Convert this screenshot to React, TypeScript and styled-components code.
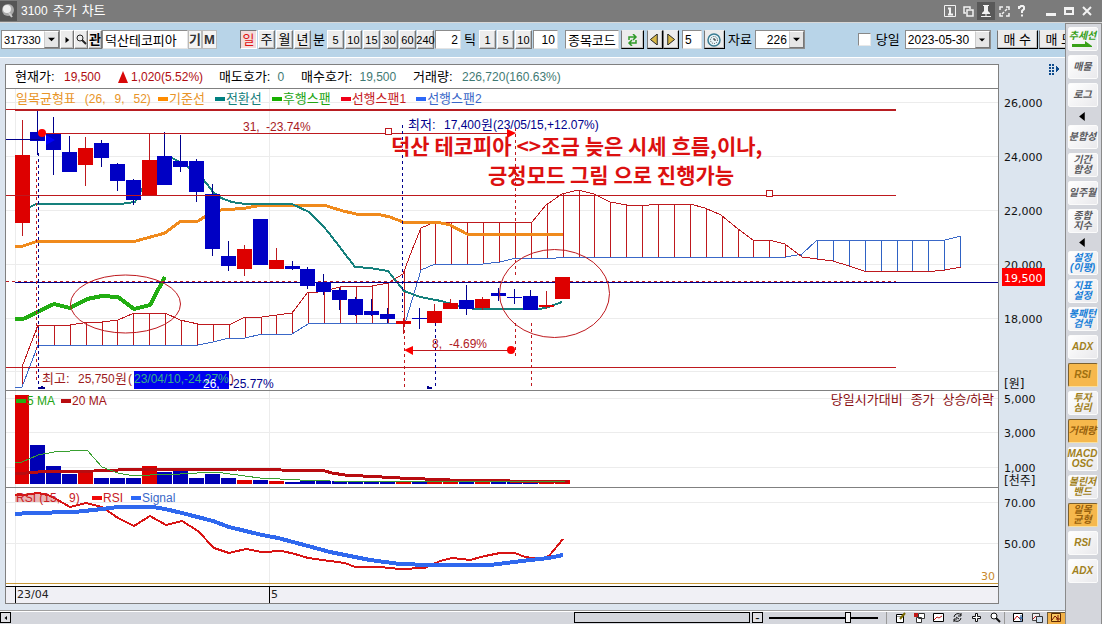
import React from "react";
import styled, { createGlobalStyle, css } from "styled-components";

const Global = createGlobalStyle`
  *, *::before, *::after { box-sizing: border-box; }
  body { margin: 0; background: #dce5ef; }
  button, input, select { font: inherit; color: inherit; margin: 0; padding: 0; border-radius: 0; }
`;

const SANS = `"Liberation Sans", "Noto Sans CJK KR", sans-serif`;
const WIDE = `"DejaVu Sans", "Noto Sans CJK KR", sans-serif`;
const RED = "#dd0000";
const CRIMSON = "#be191e";
const BLUE = "#0000c4";
const NAVY = "#00008c";

/* ---------- window ---------- */

const Window = styled.div`
  display: flex;
  flex-direction: column;
  min-height: 100vh;
  overflow: hidden;
  font: 13px/16px ${SANS};
  color: #000;
`;

// Latin letters and figures run one size below the Hangul around them.
const Latin = styled.span`
  font-size: 12px;
`;

const TitleBar = styled.header`
  display: flex;
  align-items: center;
  height: 23px;
  padding-right: 6px;
  background: #7b7b7b;
  border-bottom: 1px solid #d8d8d8;
  color: #fff;
`;

const AppIcon = styled.svg`
  width: 17px;
  height: 20px;
  margin-right: 4px;
`;

const Title = styled.h1`
  display: flex;
  flex: 1;
  gap: 5px;
  margin: 0;
  font-size: 13px;
  font-weight: 400;
  white-space: nowrap;
`;

const TitleButton = styled.button<{ $on?: boolean; $gap?: number }>`
  display: grid;
  place-items: center;
  width: 18px;
  height: 18px;
  margin-left: ${(p) => p.$gap ?? 0}px;
  border: 0;
  background: ${(p) => (p.$on ? "#595959" : "transparent")};
  color: #f2f2f2;
`;

const Body = styled.div`
  display: flex;
  flex: 1;
`;

const Main = styled.main`
  display: flex;
  flex: 1;
  flex-direction: column;
  min-width: 0;
  background: #dce5ef;
`;

/* ---------- toolbar ---------- */

const Toolbar = styled.div`
  display: flex;
  align-items: center;
  height: 35px;
  padding: 0 0 1px 1px;
  overflow: hidden;
  background: #b8d4e8;
  border-bottom: 1px solid #fff;
  & > * { flex: none; }
`;

const Group = styled.div<{ $gap?: number; $left?: number }>`
  display: flex;
  align-items: center;
  gap: ${(p) => p.$gap ?? 0}px;
  margin-left: ${(p) => p.$left ?? 0}px;
`;

const Field = styled.input<{ $w: number; $num?: boolean; $right?: boolean }>`
  width: ${(p) => p.$w}px;
  height: 19px;
  padding: 0 2px;
  border: 1px solid #8c8c8c;
  border-right-color: #e4e4e4;
  border-bottom-color: #e4e4e4;
  background: #fff;
  font-size: ${(p) => (p.$num ? 12 : 13)}px;
  text-align: ${(p) => (p.$right ? "right" : "left")};
`;

const Key = styled.button<{ $w?: number; $pressed?: boolean; $dark?: boolean; $flat?: boolean; $num?: boolean }>`
  display: flex;
  align-items: center;
  justify-content: center;
  width: ${(p) => p.$w ?? 17}px;
  height: 19px;
  white-space: nowrap;
  background: #ececec;
  border: 1px solid;
  border-color: #fff #777 #777 #fff;
  box-shadow: inset -1px -1px 0 #c0c0c0;
  ${(p) => p.$num && css`font-size: 11px;`}
  ${(p) => p.$pressed && css`
    border-color: #777 #fff #fff #777;
    box-shadow: none;
    background: #f3dcdc;
    color: #e01010;
  `}
  ${(p) => p.$dark && css`border-color: #eee #000 #000 #777;`}
  ${(p) => p.$flat && css`
    border-color: #bbb;
    box-shadow: none;
    background: #f4f4f4;
    font-weight: 700;
    color: #333;
  `}
`;

const Combo = styled.span<{ $w: number; $size?: number; $right?: boolean }>`
  display: flex;
  width: ${(p) => p.$w}px;
  height: 19px;
  border: 1px solid #8c8c8c;
  background: #fff;
  font-size: ${(p) => p.$size ?? 12}px;
  select, input {
    flex: 1;
    min-width: 0;
    padding: 0 2px;
    border: 0;
    background: transparent;
    appearance: none;
    outline: 0;
    text-align: ${(p) => (p.$right ? "right" : "left")};
  }
`;

const ComboArrow = styled.span`
  display: grid;
  flex: none;
  place-items: center;
  width: 15px;
  background: #e6e6e6;
  border: 1px solid;
  border-color: #fff #777 #777 #ccc;
  pointer-events: none;
`;

const Tick = styled.input`
  width: 13px;
  height: 13px;
  appearance: none;
  background: #fff;
  border: 1px solid;
  border-color: #888 #e8e8e8 #e8e8e8 #888;
`;

const Label = styled.label<{ $pad?: number }>`
  padding: 0 ${(p) => p.$pad ?? 3}px;
`;

const Triangle = ({ dir, fill = "#000", size = 7 }: { dir: "d" | "l" | "r"; fill?: string; size?: number }) => (
  <svg width={size} height={size} viewBox="0 0 8 8" aria-hidden="true">
    <path
      d={dir === "d" ? "M0 2h8L4 6z" : dir === "l" ? "M6 0v8L1 4z" : "M2 0v8l5-4z"}
      fill={fill}
      stroke={fill === "#000" ? "none" : "#222"}
      strokeWidth="0.7"
    />
  </svg>
);

/* ---------- chart ---------- */

const ChartArea = styled.section`
  display: flex;
  flex: 1;
  align-items: flex-start;
  padding: 6px 0 6px 5px;
`;

const Frame = styled.div`
  flex: 1;
  min-width: 0;
  border: 1px solid #808080;
  background: #fff;
`;

const Quote = styled.dl`
  display: flex;
  align-items: center;
  height: 24px;
  margin: 0;
  padding-left: 9px;
  border-bottom: 1px solid #808080;
  white-space: nowrap;
`;

const QuoteItem = styled.div<{ $w: number; $gap?: number }>`
  display: flex;
  align-items: center;
  gap: ${(p) => p.$gap ?? 7}px;
  width: ${(p) => p.$w}px;
`;

const QuoteName = styled.dt`
  min-width: 42px;
`;

const QuoteValue = styled.dd<{ $up?: boolean }>`
  margin: 0;
  font-size: 12px;
  color: ${(p) => (p.$up ? "#b00c10" : "#3f7a74")};
`;

const Pane = styled.div<{ $h: number; $edge?: string }>`
  position: relative;
  height: ${(p) => p.$h}px;
  overflow: hidden;
  border-bottom: 1px solid ${(p) => p.$edge ?? "#808080"};
  background: #fff;
`;

const Plot = styled.svg`
  display: block;
  width: 100%;
  height: 100%;
  font: 12px ${SANS};
`;

const Legend = styled.div`
  position: absolute;
  top: 2px;
  left: 10px;
  display: flex;
  align-items: center;
  gap: 10px;
  white-space: nowrap;
`;

const LegendTitle = styled.span<{ $c: string; $w: number }>`
  display: flex;
  gap: 9px;
  width: ${(p) => p.$w}px;
  color: ${(p) => p.$c};
`;

const LegendItem = styled.span<{ $c: string; $w?: number }>`
  display: flex;
  align-items: center;
  width: ${(p) => (p.$w ? `${p.$w}px` : "auto")};
  color: ${(p) => p.$c};
`;

const Swatch = styled.i<{ $c: string }>`
  flex: none;
  width: 10px;
  height: 4px;
  margin-right: 1px;
  background: ${(p) => p.$c};
`;

const PaneNote = styled.p`
  position: absolute;
  top: 1px;
  right: 4px;
  display: flex;
  gap: 8px;
  margin: 0;
  color: #8b1014;
`;

const Axis = styled.svg`
  flex: none;
  width: 66px;
  height: 540px;
  font: 11px ${WIDE};
  fill: #111;
`;

const SLOT = 15.882;
const bodyX = (i: number) => Math.round(14.55 + SLOT * i);

// [rising, body top, body bottom, high, low]
const candles: [number, number, number, number, number][] = [
  [1, 155, 223, 120, 236], [0, 132, 141, 110, 155], [0, 134, 150, 117, 175], [0, 152, 172, 136, 172],
  [1, 148, 165, 137, 186], [0, 143, 158, 140, 167], [0, 164, 181, 163, 191], [0, 180, 200, 179, 205],
  [1, 160, 196, 133, 196], [0, 156, 185, 132, 185], [0, 161, 167, 135, 172], [0, 161, 192, 159, 202],
  [0, 194, 249, 184, 256], [0, 256, 266, 241, 271], [1, 249, 269, 245, 276], [0, 219, 265, 219, 265],
  [1, 260, 269, 248, 269], [0, 266, 269, 261, 270], [0, 269, 286, 267, 289], [0, 282, 292, 274, 295],
  [0, 290, 300, 288, 310], [0, 299, 315, 297, 316], [0, 311, 315, 299, 316], [0, 314, 319, 308, 323],
  [1, 321, 324, 318, 334], [0, 318, 319, 308, 329], [1, 311, 323, 304, 323], [1, 303, 309, 299, 309],
  [0, 300, 309, 285, 315], [1, 299, 308, 297, 310], [0, 293, 296, 288, 301], [0, 297, 298, 289, 304],
  [0, 296, 310, 290, 310], [1, 305, 307, 291, 309], [1, 277, 299, 277, 299],
];

const volumeTops = [
  395, 445, 466, 474, 472, 478, 478, 478, 466, 472, 471, 478, 474, 478, 480, 480, 481, 482,
  480, 481, 481, 481, 482, 482, 481, 482, 481, 482, 481, 482, 482, 482, 482, 482, 480,
];

type Pt = [number, number];
const spanA: Pt[] = [
  [22, 367], [38, 325], [70, 325], [83, 323], [102, 322], [118, 320], [134, 313], [165, 313], [180, 320],
  [198, 324], [229, 325], [245, 317], [262, 317], [292, 313], [308, 292], [318, 292], [332, 289], [340, 287],
  [372, 286], [388, 283], [403, 274], [412, 250], [421, 228], [435, 222], [532, 222], [546, 205], [562, 194],
  [578, 190], [594, 194], [610, 202], [627, 205], [642, 206], [657, 204], [690, 204], [705, 208], [721, 215],
  [738, 229], [753, 240], [769, 240], [785, 244], [802, 257], [817, 259], [833, 261], [849, 266], [864, 271],
  [935, 271], [945, 270], [961, 267],
];
const spanB: Pt[] = [
  [15, 387], [22, 387], [38, 345], [198, 345], [213, 342], [229, 338], [245, 338], [262, 334], [292, 334],
  [308, 324], [324, 323], [403, 323], [406, 320], [421, 270], [435, 264], [483, 264], [500, 262], [516, 258],
  [556, 258], [562, 257], [786, 257], [802, 254], [817, 240], [945, 240], [961, 236],
];
const pts = (s: Pt[]) => s.map((p) => p.join(",")).join(" ");

function valueAt(series: Pt[], x: number) {
  for (let i = 1; i < series.length; i++) {
    const [x0, y0] = series[i - 1];
    const [x1, y1] = series[i];
    if (x <= x1) return y0 + ((y1 - y0) * (x - x0)) / (x1 - x0);
  }
  return series[series.length - 1][1];
}

const Line = ({ d, c, w = 1 }: { d: string; c: string; w?: number }) => (
  <polyline points={d} fill="none" stroke={c} strokeWidth={w} shapeRendering="crispEdges" />
);

const HLine = ({ y, from = 6, to, c, w = 1, dash }: { y: number; from?: number; to: number | string; c: string; w?: number; dash?: string }) => (
  <line x1={from} x2={to} y1={y} y2={y} stroke={c} strokeWidth={w} strokeDasharray={dash} shapeRendering="crispEdges" />
);

const VDash = ({ x, a, b, c }: { x: number; a: number; b: number; c: string }) => (
  <line x1={x} x2={x} y1={a} y2={b} stroke={c} strokeDasharray="3 3" shapeRendering="crispEdges" />
);

const Grid = ({ rows, top, bottom }: { rows: number[]; top: number; bottom: number }) => (
  <g stroke="#ececec" shapeRendering="crispEdges">
    {rows.map((y) => <line key={y} x1="6" x2="200%" y1={y + 0.5} y2={y + 0.5} />)}
    <line x1="15.5" x2="15.5" y1={top} y2={bottom} />
    <line x1="269.5" x2="269.5" y1={top} y2={bottom} />
  </g>
);

// Each part is [x, text]; parts with Hangul are set one size larger.
const Words = ({ y, c, parts }: { y: number; c: string; parts: [number, string][] }) => (
  <text y={y} fill={c}>
    {parts.map(([x, t]) => <tspan key={x} x={x} fontSize={/[가-힣]/.test(t) ? 13 : 12}>{t}</tspan>)}
  </text>
);

const PricePlot = () => (
  <Plot role="img" aria-label="일목균형표 차트">
    <g transform="translate(-6 -89)">
      <Grid rows={[102, 156, 210, 264, 318, 371]} top={89} bottom={390} />
      <g strokeWidth="1" shapeRendering="crispEdges">
        {Array.from({ length: 60 }, (_, i) => {
          const x = Math.floor(22.5 + 15.9 * i) + 0.5;
          return (
            <line key={i} x1={x} x2={x} y1={valueAt(spanA, x)} y2={valueAt(spanB, x)} stroke={i > 48 ? "#2f62c4" : CRIMSON} />
          );
        })}
      </g>
      <Line d={pts(spanB)} c="#3a68c8" />
      <Line d={pts(spanA)} c={CRIMSON} />
      <Line w={3} c="#f08a1c" d="15,246 23,246 38,241 136,241 165,233 181,221 198,221 206,216 221,210 235,209 246,208 262,205 324,205 330,207 343,211 356,214 376,214 390,217 403,222 437,222 450,225 467,234 563,234" />
      <Line w={2} c="#15807c" d="30,207 36,204 120,204 135,202 142,189 158,165 172,158 180,162 200,175 213,192 221,198 232,202 245,204 292,204 309,212 323,226 329,233 355,267 370,268 388,271 404,291 420,297 441,301 458,306 475,309 540,309 548,307 562,302" />
      <Line w={4} c="#22ad12" d="15,319 23,319 38,312 54,304 70,308 87,299 102,296 118,297 134,309 150,305 159,288 165,277" />

      <HLine y={281.5} to={896} c={CRIMSON} dash="3 3" />
      <HLine y={282.5} from={15} to="200%" c={NAVY} />
      {candles.map(([up, top, bottom, hi, lo], i) => {
        const x = bodyX(i);
        return (
          <g key={i} shapeRendering="crispEdges">
            <line x1={x + 7.5} x2={x + 7.5} y1={hi} y2={lo} stroke={up ? CRIMSON : NAVY} />
            <rect x={x} y={top} width="15" height={bottom - top} fill={up ? RED : BLUE} />
          </g>
        );
      })}

      <HLine y={110} from={15} to={896} c="#b81e22" w={2} />
      <HLine y={109.5} to={15} c={CRIMSON} />
      <HLine y={133.5} from={42} to={510} c={CRIMSON} />
      <HLine y={139.5} to={40} c={NAVY} />
      <HLine y={195.5} to={896} c={CRIMSON} />
      <HLine y={367.5} to={896} c={CRIMSON} />
      <HLine y={350.5} from={408} to={511} c={CRIMSON} />

      <VDash x={36.5} a={161} b={380} c={CRIMSON} />
      <VDash x={38.5} a={153} b={386} c={NAVY} />
      <VDash x={402.5} a={125} b={312} c={NAVY} />
      <VDash x={515.5} a={128} b={276} c={CRIMSON} />
      <VDash x={515.5} a={323} b={356} c={CRIMSON} />
      <VDash x={404.5} a={324} b={387} c={CRIMSON} />
      <VDash x={435.5} a={323} b={388} c={NAVY} />
      <VDash x={531.5} a={323} b={387} c={CRIMSON} />

      <circle cx="42" cy="133" r="4" fill="#f00" />
      <path d="M46 135v10l9-5z" fill="#00f" />
      <path d="M507 129v9l9-5zM413 346v9l-9-5z" fill="#f00" />
      <circle cx="511" cy="350" r="4" fill="#f00" />
      <path d="M38 389v-2h3v-1h2v1h2v2zM427 386h2v1h3v2h-5z" fill={NAVY} />
      <g fill="#fff" stroke={CRIMSON} shapeRendering="crispEdges">
        <rect x="385.5" y="128.5" width="6" height="6" />
        <rect x="766.5" y="190.5" width="6" height="6" />
      </g>
      <g fill="none" stroke={CRIMSON}>
        <ellipse cx="125.5" cy="304" rx="55" ry="29" />
        <ellipse cx="554.5" cy="293.5" rx="55" ry="44" />
      </g>

      <Words y={131} c="#a81a1e" parts={[[243, "31,"], [266, "-23.74%"]]} />
      <Words y={129} c={NAVY} parts={[[408, "최저:"], [444, "17,400"], [481, "원"], [493, "(23/05/15,+12.07%)"]]} />
      <Words y={348} c="#b02024" parts={[[432, "8,"], [449, "-4.69%"]]} />
      <rect x="134" y="371" width="95" height="18" fill="#0000f0" />
      <Words y={383} c="#9c1a1c" parts={[[42, "최고:"], [78, "25,750"], [115, "원"], [128, "("], [230, ")"]]} />
      <Words y={383} c="#35b088" parts={[[134, "23/04/10,-24.27%"]]} />
      <Words y={388} c="#fff" parts={[[203, "26,"]]} />
      <Words y={388} c={NAVY} parts={[[229, "-25.77%"]]} />

      <g fill="#dc1010" fontSize="21" fontWeight="700" fontFamily='"Noto Sans CJK KR", sans-serif'>
        <text x="391" y="154">덕산 테코피아 &lt;&gt;조금 늦은 시세 흐름,이나,</text>
        <text x="488" y="183">긍정모드 그림 으로 진행가능</text>
      </g>
    </g>
  </Plot>
);

const VolumePlot = () => (
  <Plot role="img" aria-label="거래량 차트">
    <g transform="translate(-6 -391)">
      <Grid rows={[398, 432, 467]} top={391} bottom={487} />
      {volumeTops.map((top, i) => (
        <rect key={i} x={bodyX(i)} y={top} width={i ? 15 : 14} height={484 - top} fill={candles[i][0] ? RED : "#0000b4"} shapeRendering="crispEdges" />
      ))}
      <Line w={3} c="#b80c10" d="15,474 38,472 94,471 142,469 237,469 325,471 332,473 345,475 400,478 450,480 568,482" />
      <Line c="#38a030" d="15,462 22,462 38,455 54,452 70,451 87,450 102,467 118,473 134,476 150,475 180,474 215,472 230,474 260,478 300,480 330,481 565,482" />
    </g>
  </Plot>
);

const RsiPlot = () => (
  <Plot role="img" aria-label="RSI 차트">
    <g transform="translate(-6 -488)">
      <Grid rows={[502, 543]} top={488} bottom={586} />
      <path d="M15 502V495l9-1 14-2 10 2 8 5 3 3z" fill="#e8b4b4" />
      <Line w={2} c="#d81414" d="15,495 24,495 38,493 48,495 56,499 70,507 86,503 102,507 118,518 134,526 150,516 166,525 182,521 198,531 214,548 229,553 246,549 262,552 282,551 295,554 308,558 330,561 345,563 355,567 380,567 400,569 425,568 440,561 452,558 470,560 485,556 500,553 515,553 525,557 540,559 549,556 563,539" />
      <Line w={4} c="#2f68ee" d="15,514 30,513 75,512 102,509 118,507 153,507 165,509 182,513 213,521 229,527 262,535 278,538 308,546 330,552 370,560 400,564 430,565 490,565 530,560 549,558 563,555" />
      <HLine y={583.5} to="200%" c="#c89838" />
    </g>
  </Plot>
);

const RsiFloor = styled(PaneNote)`
  top: auto;
  right: 3px;
  bottom: 1px;
  font: 11px/16px ${WIDE};
  color: #c8882c;
`;

const TimeAxis = styled.div`
  display: grid;
  grid-template-columns: 9px 254px 1fr;
  height: 16px;
  background: #f0f0f5;
  font: 11px/16px ${WIDE};
  color: #222;
`;

const TimeMark = styled.span`
  padding-left: 1px;
  border-left: 1px solid #000;
`;

const axisLabels: [number, string][] = [
  [102, "26,000"], [156, "24,000"], [210, "22,000"], [264, "20,000"], [318, "18,000"], [383, "[원]"],
  [398, "5,000"], [432, "3,000"], [467, "1,000"], [480, "[천주]"], [502, "70.00"], [543, "50.00"],
];

const ValueAxis = () => (
  <Axis role="img" aria-label="가격 축">
    <g transform="translate(-999 -64)">
      {axisLabels.map(([y, t]) => (
        <text key={t} x="1004" y={y + 5} fontSize={t[0] === "[" ? 12 : 11}>{t}</text>
      ))}
      <rect x="1002" y="268" width="43" height="18" fill="#f00" />
      <text x="1004" y="282" fill="#fff">19,500</text>
      <g fill="#0c4a8c" shapeRendering="crispEdges">
        {[0, 1].flatMap((c) => [0, 1, 2, 3].map((r) => (
          <rect key={`${c}-${r}`} x={1049 + c * 3} y={64 + r * 3} width="2" height="2" />
        )))}
        <path d="M1056 66v6l3-3z" />
      </g>
    </g>
  </Axis>
);

/* ---------- status bar ---------- */

const StatusBar = styled.footer`
  display: flex;
  align-items: center;
  height: 14px;
  border-top: 1px solid #a0a0a0;
  box-shadow: inset 0 1px 0 #fff;
  background: #d4d6dc;
  & > * { flex: none; }
`;

const ScrollButton = styled.button`
  display: grid;
  place-items: center;
  width: 11px;
  height: 11px;
  border: 1px solid #000;
  background: #e0e0e4;
  line-height: 6px;
`;

const ScrollTrack = styled.div`
  display: flex;
  flex: 1 0 0;
  justify-content: flex-end;
  padding-right: 2px;
`;

const ScrollThumb = styled.button`
  width: 176px;
  height: 11px;
  border: 1px solid #000;
  background: #d4d6dc;
`;

const Zoom = styled.input`
  width: 109px;
  height: 12px;
  margin: 0 8px 0 6px;
  appearance: none;
  background: linear-gradient(#000, #000) center / 100% 2px no-repeat;
  &::-webkit-slider-thumb {
    appearance: none;
    width: 6px;
    height: 11px;
    border: 1px solid #000;
    background: #f4f4f4;
  }
`;

const ToolStrip = styled.div`
  display: flex;
  gap: 1px;
  padding-left: 4px;
  border-left: 1px solid #999;
`;

const ToolButton = styled.button<{ $on?: boolean }>`
  display: grid;
  place-items: center;
  width: 18px;
  height: 12px;
  border: 0;
  background: ${(p) => (p.$on ? "#f2b24a" : "transparent")};
  box-shadow: ${(p) => (p.$on ? "inset 1px 1px 0 #6b5a3a" : "none")};
`;

const toolIcons: Record<string, React.ReactNode> = {
  편집: <><path d="M1.500 2.500h7v8h-7z" fill="#fff" stroke="#000" /><path d="M2 4.500h6" stroke="#888" /><path d="M5 7l5-6" stroke="#7a6a00" strokeWidth="2" /></>,
  복사: <><path d="M0 1h4v4H0z" fill="#c01818" /><path d="M4.500 1.500h6v5h-6zM2.500 5.500h5v5h-5z" fill="#fff" stroke="#333" /></>,
  차트: <><path d="M.5 1.500h10v8H.5z" fill="#fff" stroke="#000" /><path d="M1 8l3-3 2 1 3-2" fill="none" stroke="#c01818" /></>,
  갱신: <path d="M2 5a4 4 0 017-2M9 1v3H6M9 6a4 4 0 01-7 2M2 10V7h3M4 5l3 2" fill="none" stroke="#111" />,
  이동: <path d="M4.500 1.500h2v3h3v2h-3v3h-2v-3h-3v-2h3z" fill="#fff" stroke="#111" />,
  확대: <><circle cx="4" cy="4" r="3" fill="#fff" stroke="#111" /><path d="M6 6l4 4" stroke="#111" strokeWidth="2" /></>,
};
const panelIcons: Record<string, React.ReactNode> = {
  분석: <><path d="M.5 1.500h9v8h-9z" fill="#fff" stroke="#000" /><path d="M1 8l3-4 4 4" fill="none" stroke="#c01818" /><path d="M8 3v7M6 6h4" stroke="#124a8c" /></>,
  겹침: <><path d="M.5 1.500h7v7h-7z" fill="#eee" stroke="#444" /><path d="M4.500 4.500h6v6h-6z" fill="#cde" stroke="#333" /><path d="M1 7l3-3" stroke="#c01818" /></>,
  목록: <><path d="M.5 1.500h9v8h-9z" fill="#f8c860" stroke="#5a2a00" /><path d="M1 8l3-4 3 3M7 3v7M5 7h5" fill="none" stroke="#7a1500" /></>,
};

const Glyph = ({ children }: { children: React.ReactNode }) => (
  <svg width="11" height="11" viewBox="0 0 11 11" aria-hidden="true">{children}</svg>
);

/* ---------- sidebar ---------- */

const Sidebar = styled.nav`
  display: flex;
  flex: none;
  flex-direction: column;
  align-items: center;
  gap: 4px;
  width: 37px;
  padding: 3px 2px 0 0;
  background: #d4d6dc;
  border: 1px solid #8a8a8a;
  border-width: 1px 1px 0 1px;
`;

const SideButton = styled.button<{ $tone: string; $on?: boolean }>`
  display: grid;
  place-content: center;
  justify-items: center;
  width: 30px;
  height: 24px;
  border: 1px solid;
  border-color: ${(p) => (p.$on ? "#7a6030 #f8e0a0 #f8e0a0 #7a6030" : "#fbfbfb")};
  border-radius: 2px;
  background: ${(p) => (p.$on ? "#f6b84c" : "linear-gradient(135deg, #fff, #e9e9ec)")};
  color: ${(p) => p.$tone};
  font: italic 700 10px/10px ${SANS};
  white-space: pre;
`;

const SideFold = styled.button`
  display: grid;
  place-items: center;
  width: 28px;
  height: 10px;
  border: 0;
  background: none;
`;

const GRAY = "#5a5a5e";
const GOLD = "#a08020";
const SKY = "#1a80d8";
const sideItems: { t: string; c: string; on?: boolean; arrow?: boolean }[] = [
  { t: "추세선", c: "#38a018", arrow: true },
  { t: "매물", c: GRAY },
  { t: "로그", c: GRAY },
  { t: "", c: GRAY },
  { t: "분합성", c: GRAY },
  { t: "기간\n합성", c: GRAY },
  { t: "일주월", c: GRAY },
  { t: "종합\n지수", c: GRAY },
  { t: "", c: GRAY },
  { t: "설정\n(이평)", c: SKY },
  { t: "지표\n설정", c: SKY },
  { t: "봉패턴\n검색", c: SKY },
  { t: "ADX", c: GOLD },
  { t: "RSI", c: "#a07010", on: true },
  { t: "투자\n심리", c: GOLD },
  { t: "거래량", c: "#96600c", on: true },
  { t: "MACD\nOSC", c: GOLD },
  { t: "볼린저\n밴드", c: GOLD },
  { t: "일목\n균형", c: "#96600c", on: true },
  { t: "RSI", c: GOLD },
  { t: "ADX", c: GOLD },
];

export default function App() {
  return (
    <Window>
      <Global />
      <TitleBar>
        <AppIcon viewBox="0 0 17 20" aria-hidden="true">
          <rect width="17" height="20" fill="#555" />
          <circle cx="8" cy="9" r="6" fill="#aaa" />
          <circle cx="7" cy="8" r="4" fill="#eee" />
          <path d="M9 12l3 4" stroke="#ccc" strokeWidth="2" />
        </AppIcon>
        <Title><Latin>3100</Latin> <span>주가</span> <span>차트</span></Title>
        <TitleButton aria-label="화면 1">
          <svg width="12" height="12" viewBox="0 0 12 12" fill="none" stroke="currentColor"><path d="M.5.5h11v11H.5z" /><path d="M4 3.500h2V9M4 9.500h5" strokeWidth="2" /></svg>
        </TitleButton>
        <TitleButton aria-label="복제">
          <svg width="11" height="11" viewBox="0 0 11 11" fill="none" stroke="currentColor" strokeWidth="1.500"><path d="M3 7H1V1h6v2M4 4h6v6H4z" /></svg>
        </TitleButton>
        <TitleButton aria-label="고정" $on>
          <svg width="10" height="12" viewBox="0 0 10 12" fill="currentColor"><path d="M2 0h6v1H7v5l2 2v1H1V8l2-2V1H2zM4.500 9h1v3h-1zM0 11h10v1H0z" /></svg>
        </TitleButton>
        <TitleButton aria-label="전체 화면">
          <svg width="11" height="11" viewBox="0 0 11 11" fill="none" stroke="currentColor" strokeWidth="1.500"><path d="M1 4V1h3M7 1h3v3M10 7v3H7M4 10H1V7M6 5l2-2M5 6L3 8" /></svg>
        </TitleButton>
        <TitleButton aria-label="도움말">
          <svg width="8" height="12" viewBox="0 0 8 12" fill="none" stroke="currentColor" strokeWidth="2"><path d="M1 4V2h1l1-1h2l1 1v2L4 6v2M4 9.500v2" /></svg>
        </TitleButton>
        <TitleButton aria-label="최소화" $gap={11}>
          <svg width="10" height="10" viewBox="0 0 10 10" fill="currentColor"><path d="M0 7h10v3H0z" /></svg>
        </TitleButton>
        <TitleButton aria-label="최대화">
          <svg width="10" height="8" viewBox="0 0 10 8" fill="currentColor" fillRule="evenodd"><path d="M0 0h10v8H0zM2 3v3h6V3z" /></svg>
        </TitleButton>
        <TitleButton aria-label="닫기">
          <svg width="10" height="10" viewBox="0 0 10 10" stroke="currentColor" strokeWidth="2"><path d="M1 1l8 8M9 1L1 9" /></svg>
        </TitleButton>
      </TitleBar>

      <Body>
        <Main>
          <Toolbar>
            <Group>
              <Combo $w={59} $size={11}>
                <input aria-label="종목코드" defaultValue="317330" />
                <ComboArrow><Triangle dir="d" /></ComboArrow>
              </Combo>
              <Key $w={14} aria-label="다음 종목"><Triangle dir="r" size={6} /></Key>
              <Key $w={14} aria-label="종목 검색">
                <svg width="11" height="11" viewBox="0 0 11 11" fill="none" stroke="#222"><circle cx="4" cy="4" r="3" /><path d="M6 6l4 4" strokeWidth="2" /></svg>
              </Key>
              <Key $w={14}><b>관</b></Key>
              <Field $w={86} aria-label="종목명" defaultValue="덕산테코피아" />
              <Key $w={14} $flat>기</Key>
              <Key $w={15} $flat>M</Key>
            </Group>

            <Group $gap={1} $left={23}>
              <Key $pressed>일</Key>
              <Key>주</Key>
              <Key>월</Key>
              <Key>년</Key>
            </Group>
            <Label htmlFor="minutes" $pad={2}>분</Label>
            <Group $gap={1}>
              {["5", "10", "15", "30", "60", "240"].map((n) => <Key key={n} $num>{n}</Key>)}
              <Field id="minutes" $w={26} $num $right defaultValue="2" />
            </Group>
            <Label htmlFor="ticks">틱</Label>
            <Group $gap={1}>
              {["1", "5", "10"].map((n) => <Key key={n} $num>{n}</Key>)}
              <Field id="ticks" $w={25} $num $right defaultValue="10" />
            </Group>
            <Group $left={7} $gap={2}>
              <Field $w={54} aria-label="종목코드 입력" defaultValue="종목코드를" />
              <Key $w={23} $dark aria-label="새로고침">
                <svg width="11" height="12" viewBox="0 0 11 12" fill="none" stroke="#2f9a28" strokeWidth="1.500"><path d="M2 6V3h6M6 0l3 3-3 3M9 6v3H3M5 6L2 9l3 3" /></svg>
              </Key>
            </Group>
            <Group $left={3}>
              <Key $w={16} $dark aria-label="이전"><Triangle dir="l" fill="#d8b848" size={11} /></Key>
              <Key $w={16} $dark aria-label="다음"><Triangle dir="r" fill="#d8b848" size={11} /></Key>
            </Group>
            <Group $left={3} $gap={2}>
              <Field $w={20} $num aria-label="간격" defaultValue="5" />
              <Key $w={21} $dark aria-label="시간 설정">
                <svg width="14" height="14" viewBox="0 0 14 14" fill="none" stroke="#3a7c92"><circle cx="7" cy="7" r="6" fill="#e8f6fa" strokeWidth="1.500" /><circle cx="7" cy="7" r="3.500" stroke="#444" strokeDasharray="1 1.200" /><path d="M7 5v2h2" stroke="#222" /></svg>
              </Key>
            </Group>
            <Label htmlFor="count">자료</Label>
            <Combo $w={50} $right>
              <input id="count" defaultValue="226" />
              <ComboArrow><Triangle dir="d" /></ComboArrow>
            </Combo>

            <Group $left={53}>
              <Tick type="checkbox" id="today" />
              <Label htmlFor="today" $pad={5}>당일</Label>
            </Group>
            <Combo $w={86}>
              <select aria-label="조회일" defaultValue="2023-05-30"><option>2023-05-30</option></select>
              <ComboArrow><Triangle dir="d" size={6} /></ComboArrow>
            </Combo>
            <Group $left={6} $gap={1}>
              <Key $w={41} $dark>매 수</Key>
              <Key $w={41} $dark>매 도</Key>
            </Group>
          </Toolbar>

          <ChartArea>
            <Frame>
              <Quote>
                <QuoteItem $w={103}>
                  <QuoteName>현재가:</QuoteName>
                  <QuoteValue $up>19,500</QuoteValue>
                </QuoteItem>
                <QuoteItem $w={101} $gap={3}>
                  <svg width="10" height="12" viewBox="0 0 10 12" aria-label="상승"><path d="M5 0l5 12H0z" fill="#d80808" /></svg>
                  <QuoteValue $up>1,020(5.52%)</QuoteValue>
                </QuoteItem>
                <QuoteItem $w={82}>
                  <QuoteName>매도호가:</QuoteName>
                  <QuoteValue>0</QuoteValue>
                </QuoteItem>
                <QuoteItem $w={112}>
                  <QuoteName>매수호가:</QuoteName>
                  <QuoteValue>19,500</QuoteValue>
                </QuoteItem>
                <QuoteItem $w={160}>
                  <QuoteName>거래량:</QuoteName>
                  <QuoteValue>226,720(160.63%)</QuoteValue>
                </QuoteItem>
              </Quote>

              <Pane $h={302}>
                <PricePlot />
                <Legend>
                  <LegendTitle $c="#e89428" $w={132}>일목균형표 <Latin>(26,</Latin> <Latin>9,</Latin> <Latin>52)</Latin></LegendTitle>
                  <LegendItem $c="#e89428"><Swatch $c="#ff8c00" />기준선</LegendItem>
                  <LegendItem $c="#15807c"><Swatch $c="#008080" />전환선</LegendItem>
                  <LegendItem $c="#22a412"><Swatch $c="#18b000" />후행스팬</LegendItem>
                  <LegendItem $c="#c4181c"><Swatch $c="#f00018" />선행스팬<Latin>1</Latin></LegendItem>
                  <LegendItem $c="#3a68c8"><Swatch $c="#2c68f8" />선행스팬<Latin>2</Latin></LegendItem>
                </Legend>
              </Pane>

              <Pane $h={97}>
                <VolumePlot />
                <Legend>
                  <LegendItem $c="#22a412" $w={35}><Swatch $c="#22b010" /><Latin>5 MA</Latin></LegendItem>
                  <LegendItem $c="#a01418"><Swatch $c="#b80c10" /><Latin>20 MA</Latin></LegendItem>
                </Legend>
                <PaneNote><span>당일시가대비</span> <span>종가</span> <span>상승/하락</span></PaneNote>
              </Pane>

              <Pane $h={99} $edge="#000">
                <RsiPlot />
                <Legend>
                  <LegendTitle $c="#c82024" $w={66}><Latin>RSI (15,</Latin> <Latin>9)</Latin></LegendTitle>
                  <LegendItem $c="#c82024" $w={29}><Swatch $c="#f00808" /><Latin>RSI</Latin></LegendItem>
                  <LegendItem $c="#3a68c8"><Swatch $c="#2c68f8" /><Latin>Signal</Latin></LegendItem>
                </Legend>
                <RsiFloor>30</RsiFloor>
              </Pane>

              <TimeAxis>
                <span />
                <TimeMark>23/04</TimeMark>
                <TimeMark>5</TimeMark>
              </TimeAxis>
            </Frame>
            <ValueAxis />
          </ChartArea>

          <StatusBar>
            <ScrollButton aria-label="왼쪽으로"><Triangle dir="l" size={4} /></ScrollButton>
            <ScrollTrack><ScrollThumb aria-label="차트 스크롤" /></ScrollTrack>
            <ScrollButton aria-label="축소">-</ScrollButton>
            <Zoom type="range" aria-label="배율" min={0} max={100} defaultValue={74} />
            <ToolStrip>
              {Object.entries(toolIcons).map(([name, icon]) => (
                <ToolButton key={name} aria-label={name}><Glyph>{icon}</Glyph></ToolButton>
              ))}
            </ToolStrip>
            <ToolStrip>
              {Object.entries(panelIcons).map(([name, icon]) => (
                <ToolButton key={name} aria-label={name} $on={name === "목록"}><Glyph>{icon}</Glyph></ToolButton>
              ))}
            </ToolStrip>
          </StatusBar>
        </Main>

        <Sidebar aria-label="차트 도구">
          {sideItems.map((item, i) =>
            item.t ? (
              <SideButton key={i} $tone={item.c} $on={item.on}>
                {item.t}
                {item.arrow && (
                  <svg width="20" height="6" viewBox="0 0 20 6" aria-hidden="true"><path d="M0 3h13V0l7 5v1H0z" fill="#38a018" /></svg>
                )}
              </SideButton>
            ) : (
              <SideFold key={i} aria-label="접기"><Triangle dir="l" size={9} /></SideFold>
            ),
          )}
        </Sidebar>
      </Body>
    </Window>
  );
}
